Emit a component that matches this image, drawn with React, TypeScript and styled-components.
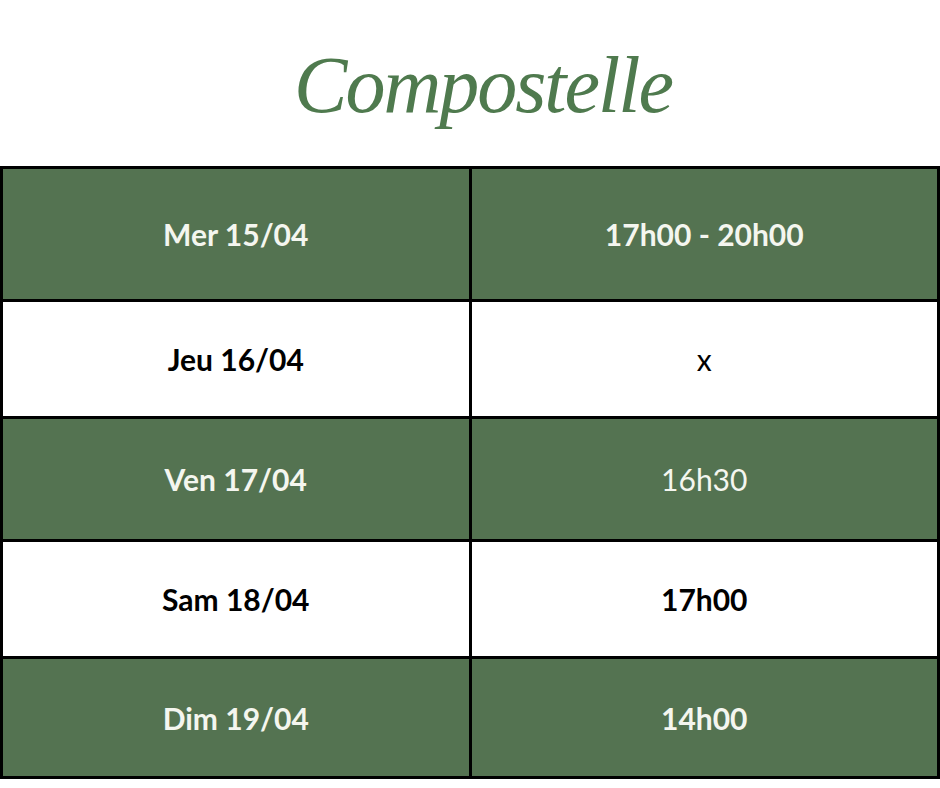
import styled, { createGlobalStyle } from "styled-components";

const GlobalStyle = createGlobalStyle`
  html, body {
    margin: 0;
    padding: 0;
    background: #ffffff;
  }
`;

const Page = styled.div`
  width: 940px;
  height: 788px;
  background: #ffffff;
  display: flex;
  flex-direction: column;
`;

const Title = styled.h1`
  height: 166px;
  margin: 0;
  display: flex;
  align-items: center;
  justify-content: center;
  padding-left: 26px;
  padding-top: 4px;
  box-sizing: border-box;
  font-family: "Liberation Serif", "DejaVu Serif", serif;
  font-style: italic;
  font-weight: 400;
  font-size: 80px;
  letter-spacing: -2px;
  color: #4f7a4e;
`;

const Schedule = styled.table`
  width: 940px;
  border-collapse: collapse;
  table-layout: fixed;
  border: 3px solid #000;
`;

const Row = styled.tr<{ $green: boolean; $h: number }>`
  height: ${(p) => p.$h}px;
  background: ${(p) => (p.$green ? "#547351" : "#ffffff")};
  color: ${(p) => (p.$green ? "#f4f6ef" : "#000000")};
`;

const Cell = styled.td<{ $light?: boolean }>`
  border: 3px solid #000;
  padding: 0;
  text-align: center;
  vertical-align: middle;
  font-family: Lato, "Liberation Sans", sans-serif;
  font-size: 30px;
  font-weight: ${(p) => (p.$light ? 400 : 700)};
`;

const rows = [
  { day: "Mer 15/04", time: "17h00 - 20h00", light: false, h: 133 },
  { day: "Jeu 16/04", time: "x", light: true, h: 117 },
  { day: "Ven 17/04", time: "16h30", light: true, h: 123 },
  { day: "Sam 18/04", time: "17h00", light: false, h: 117 },
  { day: "Dim 19/04", time: "14h00", light: false, h: 120 },
];

export default function App() {
  return (
    <Page>
      <GlobalStyle />
      <Title>Compostelle</Title>
      <Schedule>
        <tbody>
          {rows.map((r, i) => (
            <Row key={r.day} $green={i % 2 === 0} $h={r.h}>
              <Cell>{r.day}</Cell>
              <Cell $light={r.light}>{r.time}</Cell>
            </Row>
          ))}
        </tbody>
      </Schedule>
    </Page>
  );
}
